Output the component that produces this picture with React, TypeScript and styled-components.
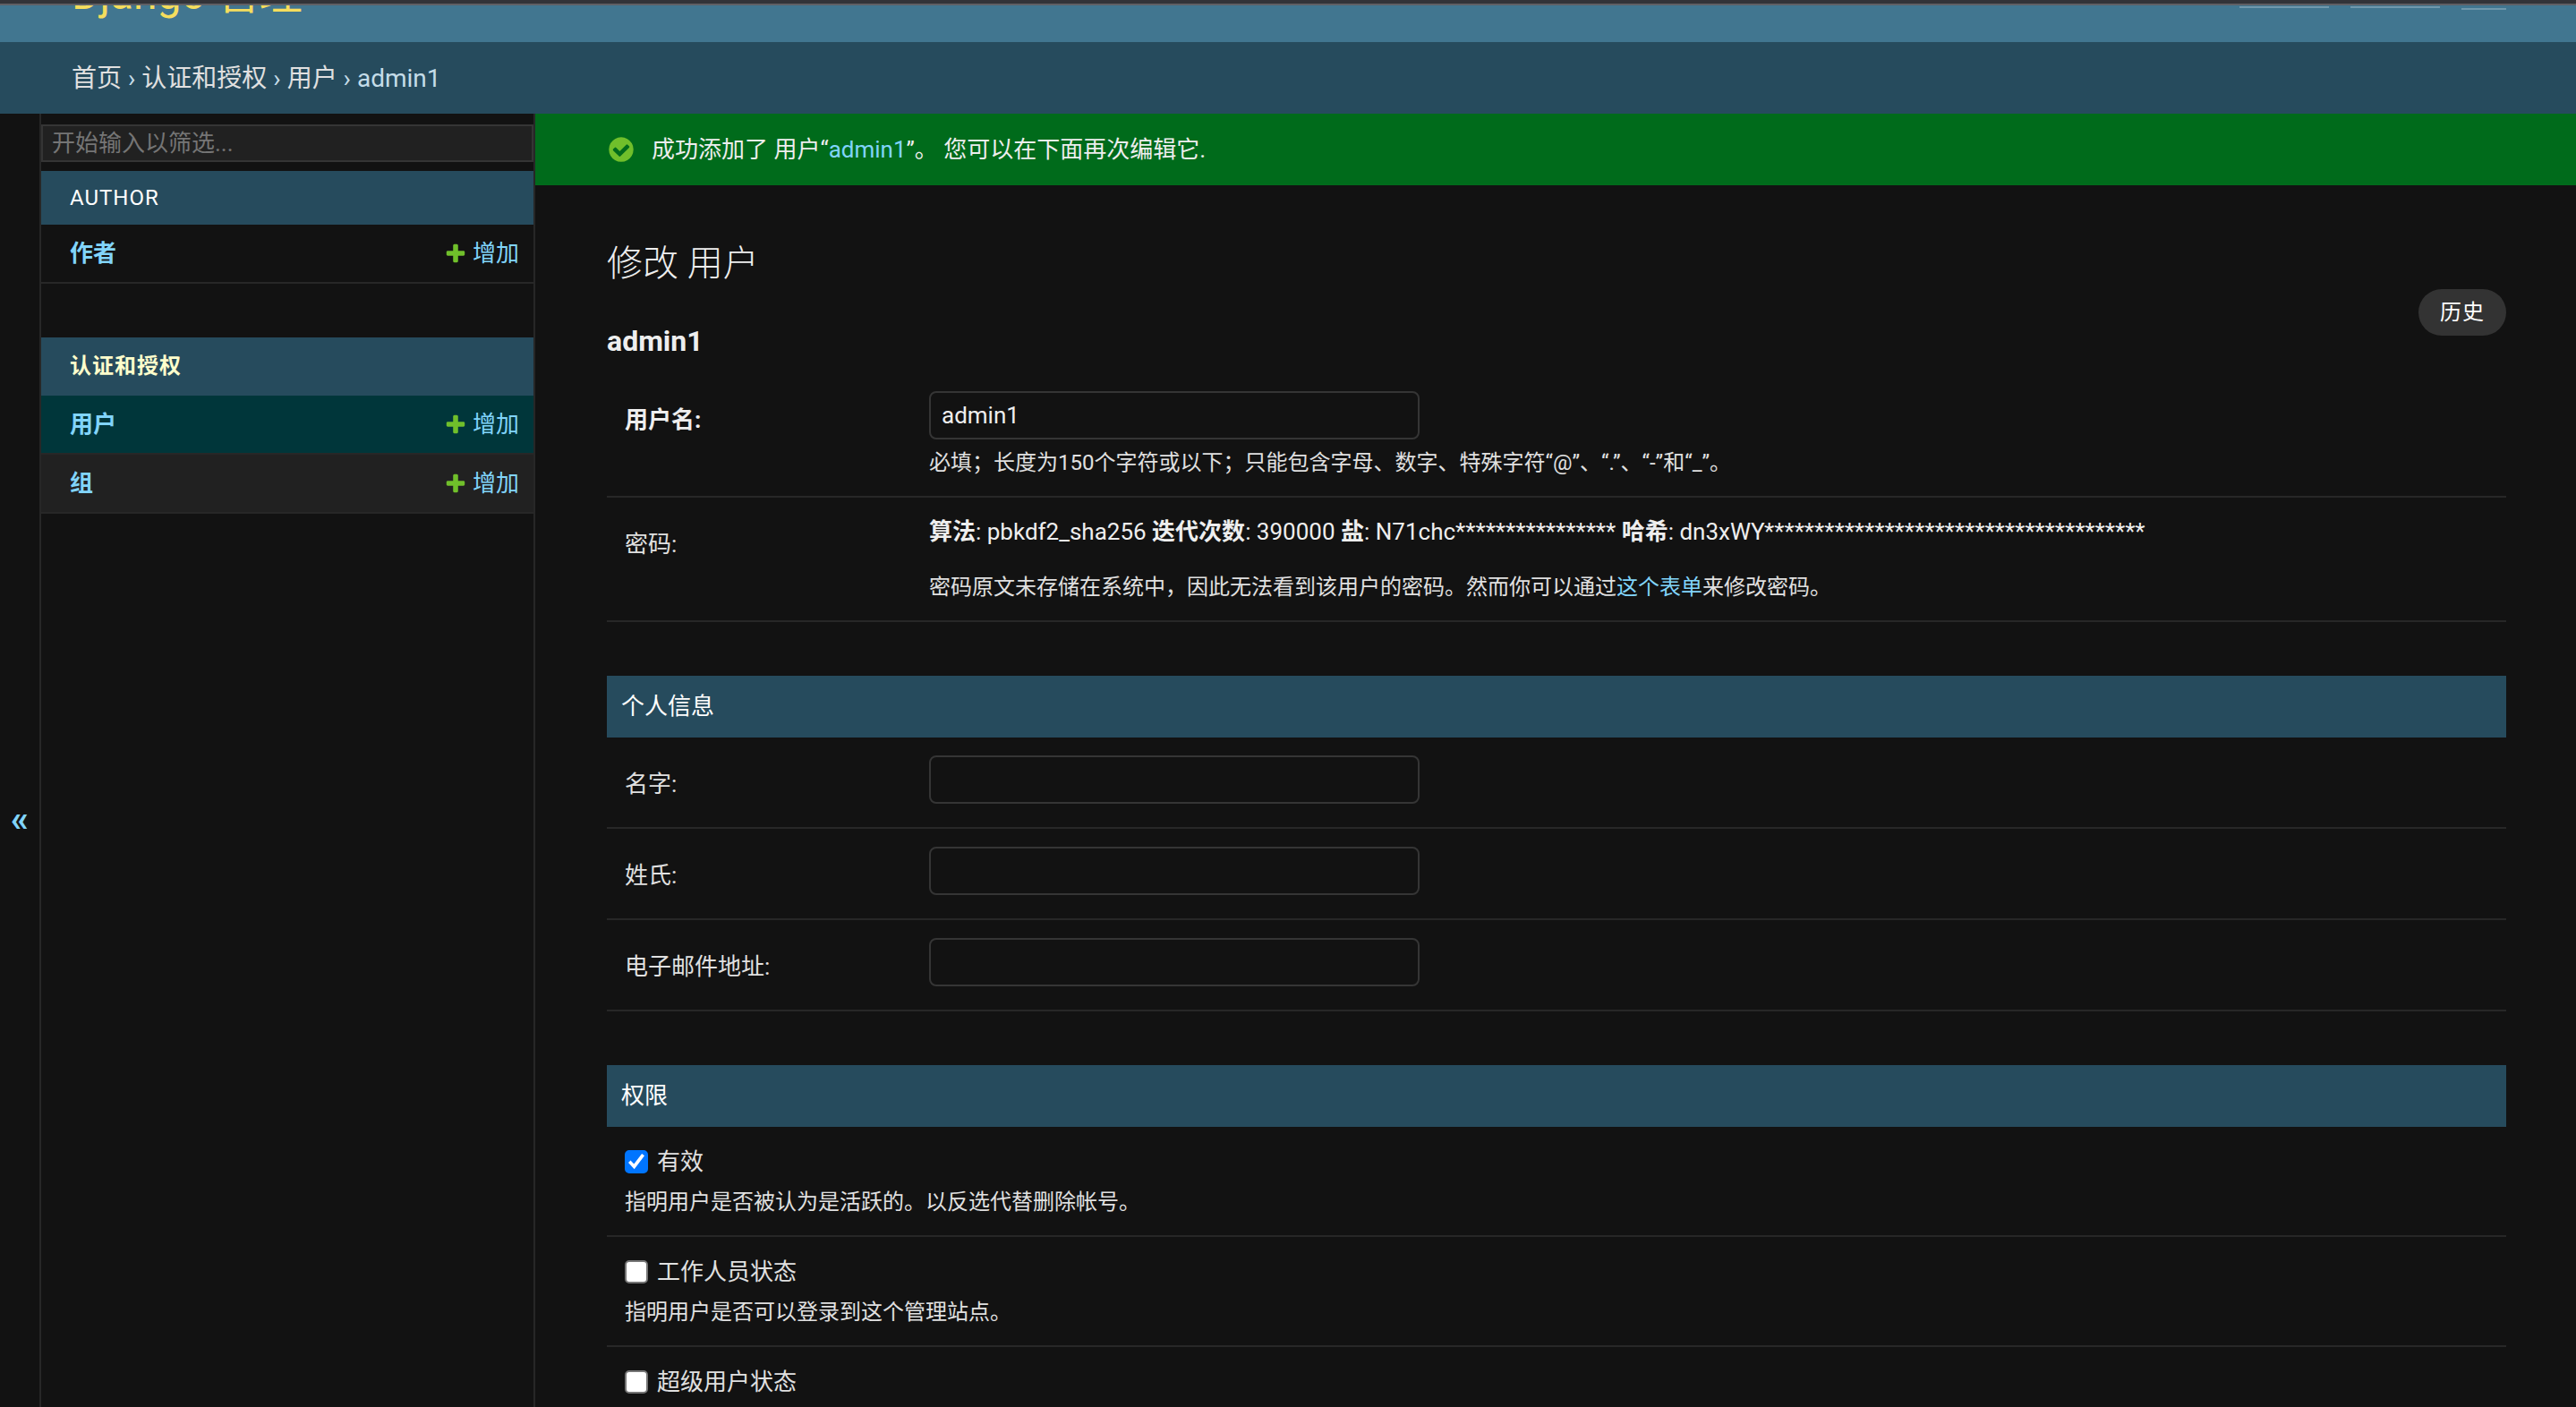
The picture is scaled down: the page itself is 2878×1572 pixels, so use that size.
import React from "react";
import styled, { createGlobalStyle, css } from "styled-components";

const color = {
  primary: "#264b5d",
  secondary: "#417690",
  accent: "#f5dd5d",
  body: "#121212",
  fg: "#eeeeee",
  quiet: "#e0e0e0",
  link: "#81d4fa",
  hairline: "#272727",
  border: "#353535",
  darkened: "#212121",
  selected: "#00363a",
  success: "#006b1b",
  icon: "#70bf2b",
};

const GlobalStyle = createGlobalStyle`
  *, *::before, *::after { box-sizing: border-box; }
  body {
    margin: 0;
    background: ${color.body};
    color: ${color.fg};
    font-family: Roboto, "Noto Sans CJK SC", sans-serif;
    font-size: 26px;
  }
  h1, h2, p { margin: 0; }
  a { color: ${color.link}; text-decoration: none; }
  input, button { font-family: inherit; }
`;

const Page = styled.div`
  display: flex;
  flex-direction: column;
  height: 100vh;
  overflow: hidden;
`;

const WindowEdge = styled.div`
  flex: none;
  height: 6px;
  background: #323338;
  border-bottom: 2px solid #5f6065;
`;

const Header = styled.header`
  flex: none;
  display: flex;
  justify-content: space-between;
  align-items: flex-start;
  height: 41px;
  padding: 0 78px 0 80px;
  overflow: hidden;
  background: ${color.secondary};
`;

const SiteName = styled.h1`
  margin-top: -40px;
  font-size: 48px;
  line-height: 56px;
  font-weight: 400;
  color: ${color.accent};
`;

const UserTools = styled.nav`
  display: flex;
  gap: 24px;
`;

const ToolLink = styled.a<{ $short?: boolean }>`
  width: ${(p) => (p.$short ? 50 : 100)}px;
  height: ${(p) => (p.$short ? 5 : 3)}px;
  border-bottom: 2px solid rgba(255, 255, 255, 0.25);
`;

const Breadcrumbs = styled.nav`
  flex: none;
  padding: 21px 80px 19px;
  background: ${color.primary};
  color: #c4dce8;
  font-size: 28px;
  line-height: 40px;

  a { color: ${color.quiet}; }
`;

const Main = styled.div`
  flex: 1 0 auto;
  display: flex;
  min-height: 100vh;
`;

const SidebarToggle = styled.button`
  flex: none;
  display: flex;
  align-items: center;
  justify-content: center;
  width: 46px;
  height: 100vh;
  padding: 4px 0 0;
  border: 0;
  border-right: 2px solid ${color.hairline};
  background: ${color.body};
  color: ${color.link};
  font-size: 40px;
  font-weight: 700;
`;

const Sidebar = styled.nav`
  flex: none;
  width: 552px;
  padding-top: 12px;
  border-right: 2px solid ${color.hairline};
`;

const Filter = styled.input`
  display: block;
  width: 100%;
  height: 42px;
  margin-bottom: 10px;
  padding: 0 10px;
  border: 2px solid ${color.border};
  border-radius: 0;
  background: ${color.darkened};
  color: ${color.fg};
  font-size: 26px;

  &::placeholder { color: #757575; }
`;

const AppTable = styled.table`
  width: 100%;
  margin-bottom: 60px;
  border-spacing: 0;
`;

const AppCaption = styled.caption<{ $current?: boolean }>`
  padding: 0 32px;
  background: ${color.primary};
  text-align: left;
  text-transform: uppercase;
  font-size: 24px;
  letter-spacing: 1px;
  line-height: 60px;

  a { color: #ffffff; }

  ${(p) =>
    p.$current &&
    css`
      line-height: 65px;
      font-weight: 700;
      a { color: #ffffcc; }
    `}
`;

const ModelRow = styled.tr<{ $tone?: string }>`
  background: ${(p) => p.$tone ?? "transparent"};

  th, td {
    height: 66px;
    padding: 0 16px 0 32px;
    border-bottom: 2px solid ${color.hairline};
    text-align: left;
    line-height: 36px;
  }
  td { width: 150px; padding-left: 0; }
`;

const AddLink = styled.a`
  display: flex;
  align-items: center;
  justify-content: flex-end;
  gap: 6px;
`;

const Content = styled.main`
  flex: 1;
  min-width: 0;
`;

const Message = styled.div`
  display: flex;
  align-items: center;
  gap: 18px;
  height: 80px;
  padding: 0 80px;
  background: ${color.success};
  line-height: 36px;
`;

const Form = styled.form`
  padding: 0 78px 0 80px;
`;

const TitleBar = styled.div`
  display: flex;
  align-items: flex-start;
  justify-content: space-between;
  padding: 60px 0 18px;
`;

const Title = styled.h1`
  margin-bottom: 40px;
  font-size: 40px;
  line-height: 56px;
  font-weight: 300;
`;

const Subtitle = styled.h2`
  font-size: 32px;
  line-height: 36px;
  font-weight: 700;
`;

const HistoryLink = styled.a`
  margin-top: 56px;
  padding: 0 24px;
  border-radius: 26px;
  background: #333333;
  color: #ffffff;
  font-size: 24px;
  letter-spacing: 1px;
  line-height: 52px;
`;

const Module = styled.section`
  margin-bottom: 60px;
`;

const ModuleTitle = styled.h2`
  padding: 16px;
  background: ${color.primary};
  color: #ffffff;
  font-size: 26px;
  font-weight: 400;
  line-height: 37px;
`;

const Row = styled.div`
  display: flex;
  padding: 20px 20px 18px;
  border-bottom: 2px solid ${color.hairline};
`;

const StackedRow = styled(Row)`
  flex-direction: column;
`;

const labelText = css`
  color: ${color.quiet};
  font-size: 26px;
  line-height: 36px;
`;

const Label = styled.label<{ $required?: boolean }>`
  ${labelText}
  width: 340px;
  padding-top: 14px;
  ${(p) => p.$required && css`font-weight: 700; color: ${color.fg};`}
`;

const TextInput = styled.input`
  display: block;
  width: 548px;
  height: 54px;
  margin-bottom: 8px;
  padding: 0 12px;
  border: 2px solid ${color.border};
  border-radius: 8px;
  background: ${color.body};
  color: ${color.fg};
  font-size: 26px;
`;

const PasswordSummary = styled.p`
  margin-bottom: 26px;
  line-height: 36px;
`;

const Help = styled.p`
  color: ${color.quiet};
  font-size: 24px;
  line-height: 37px;
`;

const CheckLine = styled.div`
  display: flex;
  align-items: center;
  gap: 10px;
  height: 38px;
  margin-bottom: 8px;

  label { ${labelText} }
`;

const Checkbox = styled.input`
  appearance: none;
  display: grid;
  place-items: center;
  width: 26px;
  height: 26px;
  margin: 0;
  border: 2px solid #767676;
  border-radius: 5px;
  background: #ffffff;

  &:checked {
    border-color: #0075ff;
    background: #0075ff;
  }

  &:checked::before {
    content: "";
    width: 18px;
    height: 18px;
    background: #ffffff;
    clip-path: polygon(0 56%, 14% 42%, 35% 64%, 84% 0, 100% 13%, 37% 96%);
  }
`;

const PlusIcon = () => (
  <svg width="26" height="26" viewBox="0 0 1792 1792" aria-hidden="true">
    <path
      fill={color.icon}
      d="M1600 796v192q0 40-28 68t-68 28h-416v416q0 40-28 68t-68 28h-192q-40 0-68-28t-28-68v-416h-416q-40 0-68-28t-28-68v-192q0-40 28-68t68-28h416v-416q0-40 28-68t68-28h192q40 0 68 28t28 68v416h416q40 0 68 28t28 68z"
    />
  </svg>
);

const SuccessIcon = () => (
  <svg width="32" height="32" viewBox="0 0 1792 1792" aria-hidden="true">
    <path
      fill={color.icon}
      d="M1412 734q0-28-18-46l-91-90q-19-19-45-19t-45 19l-408 407-226-226q-19-19-45-19t-45 19l-91 90q-18 18-18 46 0 27 18 45l362 362q19 19 45 19 27 0 46-19l543-543q18-18 18-45zm252 162q0 209-103 385.5t-279.5 279.5-385.5 103-385.5-103-279.5-279.5-103-385.5 103-385.5 279.5-279.5 385.5-103 385.5 103 279.5 279.5 103 385.5z"
    />
  </svg>
);

type Model = { name: string; tone?: string };

const apps: { title: string; current?: boolean; models: Model[] }[] = [
  { title: "Author", models: [{ name: "作者" }] },
  {
    title: "认证和授权",
    current: true,
    models: [
      { name: "用户", tone: color.selected },
      { name: "组", tone: color.darkened },
    ],
  },
];

const personal = [
  { id: "first_name", label: "名字:" },
  { id: "last_name", label: "姓氏:" },
  { id: "email", label: "电子邮件地址:" },
];

const permissions = [
  {
    id: "is_active",
    label: "有效",
    checked: true,
    help: "指明用户是否被认为是活跃的。以反选代替删除帐号。",
  },
  { id: "is_staff", label: "工作人员状态", help: "指明用户是否可以登录到这个管理站点。" },
  { id: "is_superuser", label: "超级用户状态" },
];

export default function App() {
  return (
    <Page lang="zh-Hans">
      <GlobalStyle />
      <WindowEdge />
      <Header>
        <SiteName>Django 管理</SiteName>
        <UserTools>
          <ToolLink href="#site" />
          <ToolLink href="#password" />
          <ToolLink href="#logout" $short />
        </UserTools>
      </Header>
      <Breadcrumbs>
        <a href="#home">首页</a> › <a href="#auth">认证和授权</a> ›{" "}
        <a href="#users">用户</a> › admin1
      </Breadcrumbs>
      <Main>
        <SidebarToggle type="button">«</SidebarToggle>
        <Sidebar>
          <Filter type="text" placeholder="开始输入以筛选..." />
          {apps.map((app) => (
            <AppTable key={app.title}>
              <AppCaption $current={app.current}>
                <a href="#app">{app.title}</a>
              </AppCaption>
              <tbody>
                {app.models.map((m) => (
                  <ModelRow key={m.name} $tone={m.tone}>
                    <th scope="row">
                      <a href="#model">{m.name}</a>
                    </th>
                    <td>
                      <AddLink href="#add">
                        <PlusIcon />
                        增加
                      </AddLink>
                    </td>
                  </ModelRow>
                ))}
              </tbody>
            </AppTable>
          ))}
        </Sidebar>
        <Content>
          <Message>
            <SuccessIcon />
            <span>
              成功添加了 用户“<a href="#admin1">admin1</a>”。 您可以在下面再次编辑它.
            </span>
          </Message>
          <Form>
            <TitleBar>
              <div>
                <Title>修改 用户</Title>
                <Subtitle>admin1</Subtitle>
              </div>
              <HistoryLink href="#history">历史</HistoryLink>
            </TitleBar>
            <Module>
              <Row>
                <Label htmlFor="username" $required>
                  用户名:
                </Label>
                <div>
                  <TextInput id="username" type="text" defaultValue="admin1" />
                  <Help>
                    必填；长度为150个字符或以下；只能包含字母、数字、特殊字符“@”、“.”、“-”和“_”。
                  </Help>
                </div>
              </Row>
              <Row>
                <Label as="span">密码:</Label>
                <div>
                  <PasswordSummary>
                    <strong>算法</strong>: pbkdf2_sha256 <strong>迭代次数</strong>: 390000{" "}
                    <strong>盐</strong>: N71chc{"*".repeat(16)} <strong>哈希</strong>: dn3xWY
                    {"*".repeat(38)}
                  </PasswordSummary>
                  <Help>
                    密码原文未存储在系统中，因此无法看到该用户的密码。然而你可以通过
                    <a href="#change">这个表单</a>来修改密码。
                  </Help>
                </div>
              </Row>
            </Module>
            <Module>
              <ModuleTitle>个人信息</ModuleTitle>
              {personal.map((f) => (
                <Row key={f.id}>
                  <Label htmlFor={f.id}>{f.label}</Label>
                  <TextInput id={f.id} type="text" />
                </Row>
              ))}
            </Module>
            <Module>
              <ModuleTitle>权限</ModuleTitle>
              {permissions.map((p) => (
                <StackedRow key={p.id}>
                  <CheckLine>
                    <Checkbox id={p.id} type="checkbox" defaultChecked={p.checked} />
                    <label htmlFor={p.id}>{p.label}</label>
                  </CheckLine>
                  {p.help && <Help>{p.help}</Help>}
                </StackedRow>
              ))}
            </Module>
          </Form>
        </Content>
      </Main>
    </Page>
  );
}
